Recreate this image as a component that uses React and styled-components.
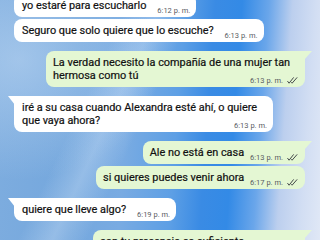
import React from "react"
import styled, { createGlobalStyle, css } from "styled-components"

const GlobalStyle = createGlobalStyle`
  html, body {
    margin: 0;
    padding: 0;
  }
  body {
    font-family: Roboto, "Noto Sans", sans-serif;
  }
`

const Screen = styled.div`
  width: 320px;
  height: 240px;
  overflow: hidden;
  background:
    radial-gradient(ellipse 140px 120px at 20px 60px, rgba(200, 222, 245, 0.5), rgba(200, 222, 245, 0)),
    linear-gradient(115deg, rgba(255, 255, 255, 0) 30%, rgba(210, 228, 248, 0.35) 38%, rgba(255, 255, 255, 0) 46%),
    linear-gradient(
      94deg,
      #7eaddf 0%,
      #74a7dd 25%,
      #79abe2 40%,
      #5d9fe5 55%,
      #3a8be4 64%,
      #338ae6 72%,
      #6aa6ea 80%,
      #bccfee 87%,
      #d2def3 94%,
      #e0e8f6 100%
    );
`

const Thread = styled.div`
  display: flex;
  flex-direction: column;
  margin-top: -6px;
  padding: 0 15px 0 14px;
`

const Bubble = styled.div`
  position: relative;
  display: flex;
  flex-wrap: wrap;
  align-items: flex-end;
  column-gap: ${(p) => (p.$out ? "6px" : "11px")};
  box-sizing: border-box;
  max-width: 259px;
  padding: 5px ${(p) => (p.$out ? "7px" : "6px")} 5px ${(p) => (p.$out ? "7px" : "8px")};
  margin-top: ${(p) => (p.$first ? "9px" : "2px")};
  border-radius: 8px;
  background: ${(p) => (p.$out ? "#e4f7d3" : "#ffffff")};
  align-self: ${(p) => (p.$out ? "flex-end" : "flex-start")};

  &:first-child {
    margin-top: 0;
  }

  ${(p) =>
    p.$tail &&
    (p.$out
      ? css`
          border-top-right-radius: 0;
          &::after {
            content: "";
            position: absolute;
            top: 0;
            right: -7px;
            width: 8px;
            height: 9px;
            background: #e4f7d3;
            clip-path: polygon(0 0, 100% 0, 0 100%);
          }
        `
      : css`
          border-top-left-radius: 0;
          &::after {
            content: "";
            position: absolute;
            top: 0;
            left: -6px;
            width: 7px;
            height: 9px;
            background: #ffffff;
            clip-path: polygon(0 0, 100% 0, 100% 100%);
          }
        `)}
`

const Text = styled.span`
  font-size: 10.9px;
  line-height: 13px;
  color: #111111;
  -webkit-text-stroke: 0.2px #111111;
`

const Meta = styled.span`
  display: flex;
  align-items: center;
  gap: 4px;
  margin-left: auto;
  margin-top: -6px;
  margin-bottom: -3px;
  height: 9px;
  white-space: nowrap;
`

const Time = styled.span`
  font-size: 7.5px;
  line-height: 9px;
  color: #575b5f;
`

const Ticks = () => (
  <svg width="11" height="7" viewBox="0 0 11 7" fill="none">
    <path
      d="M0.7 4.4 L2.1 6.2 L6.4 0.7"
      stroke="#3a3e42"
      strokeWidth="0.95"
      strokeLinecap="round"
      strokeLinejoin="round"
    />
    <path
      d="M4.6 5.6 L5.1 6.2 L9.9 0.7"
      stroke="#3a3e42"
      strokeWidth="0.95"
      strokeLinecap="round"
      strokeLinejoin="round"
    />
  </svg>
)

const messages = [
  { text: "yo estaré para escucharlo", time: "6:12 p. m." },
  { text: "Seguro que solo quiere que lo escuche?", time: "6:13 p. m." },
  {
    text: "La verdad necesito la compañía de una mujer tan hermosa como tú",
    time: "6:13 p. m.",
    out: true,
    first: true,
    tail: true,
  },
  {
    text: "iré a su casa cuando Alexandra esté ahí, o quiere que vaya ahora?",
    time: "6:13 p. m.",
    first: true,
    tail: true,
  },
  { text: "Ale no está en casa", time: "6:13 p. m.", out: true, first: true, tail: true },
  { text: "si quieres puedes venir ahora", time: "6:17 p. m.", out: true },
  { text: "quiere que lleve algo?", time: "6:19 p. m.", first: true, tail: true },
  { text: "con tu presencia es suficiente", time: "6:20 p. m.", out: true, first: true, tail: true },
]

const App = () => {
  return (
    <>
      <GlobalStyle />
      <Screen>
        <Thread>
          {messages.map((m, id) => (
            <Bubble key={id} $out={m.out} $first={m.first} $tail={m.tail}>
              <Text>{m.text}</Text>
              <Meta>
                <Time>{m.time}</Time>
                {m.out && <Ticks />}
              </Meta>
            </Bubble>
          ))}
        </Thread>
      </Screen>
    </>
  )
}

export default App
